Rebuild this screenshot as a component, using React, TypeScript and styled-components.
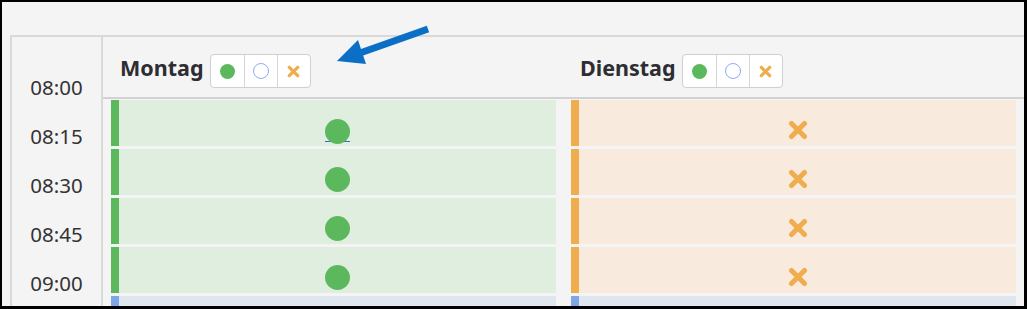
import React from "react";
import styled, { createGlobalStyle } from "styled-components";

type Status = "yes" | "maybe" | "no" | "open";

const palette: Record<Status, { bar: string; fill: string }> = {
  yes: { bar: "#5cb85c", fill: "#e0eee0" },
  no: { bar: "#f0ad4e", fill: "#f8ebde" },
  maybe: { bar: "#7ea7e8", fill: "#dfe6f0" },
  open: { bar: "#7ea7e8", fill: "#dfe6f0" },
};

const GlobalStyle = createGlobalStyle`
  html, body {
    margin: 0;
    padding: 0;
    background: #000;
    font-family: "Noto Sans", "Open Sans", Arial, sans-serif;
    color: #333;
  }
`;

const Frame = styled.div`
  position: relative;
  width: 1027px;
  height: 309px;
  box-sizing: border-box;
  border: 2px solid #000;
  border-right-width: 3px;
  border-bottom-width: 3px;
  background: #f4f4f4;
  overflow: hidden;
  padding: 33px 0 0 8px;
`;

const Table = styled.div`
  display: grid;
  grid-template-columns: 91px 1fr;
  height: 100%;
  border-top: 2px solid #d9d9d9;
  border-left: 2px solid #d9d9d9;
`;

const TimeColumn = styled.div`
  display: flex;
  flex-direction: column;
  padding-top: 25px;
  border-right: 2px solid #dadada;
`;

const TimeLabel = styled.div`
  height: 49px;
  flex: none;
  display: flex;
  align-items: center;
  justify-content: center;
  font-size: 20.5px;
  color: #333;
`;

const Main = styled.div`
  display: flex;
  flex-direction: column;
  min-width: 0;
`;

const HeaderRow = styled.div`
  display: grid;
  grid-template-columns: 1fr 1fr;
  column-gap: 15px;
  height: 60px;
  padding: 0 8px;
  border-bottom: 2px solid #d2d2d2;
`;

const DayHeader = styled.div`
  display: flex;
  align-items: center;
  gap: 6px;
  padding: 8px 0 0 9px;
`;

const DayName = styled.span`
  font-size: 21.5px;
  font-weight: 700;
  color: #2d2d33;
  padding-bottom: 7px;
`;

const ToggleGroup = styled.div`
  display: inline-flex;
  height: 34px;
  box-sizing: border-box;
  border: 1px solid #cfcfcf;
  border-radius: 4px;
  background: #fff;
  overflow: hidden;
`;

const ToggleButton = styled.button`
  width: 33px;
  height: 32px;
  padding: 0;
  border: none;
  border-left: 1px solid #d6d6d6;
  background: transparent;
  display: flex;
  align-items: center;
  justify-content: center;
  &:first-child {
    border-left: none;
  }
`;

const Dot = styled.span<{ $size: number; $outline?: boolean }>`
  display: inline-block;
  width: ${(p) => p.$size}px;
  height: ${(p) => p.$size}px;
  box-sizing: border-box;
  border-radius: 50%;
  background: ${(p) => (p.$outline ? "transparent" : "#5cb85c")};
  border: ${(p) => (p.$outline ? "1.5px solid #8eabf3" : "none")};
`;

const Body = styled.div`
  display: grid;
  grid-template-columns: 1fr 1fr;
  column-gap: 15px;
  padding: 1px 8px 0;
`;

const DayColumn = styled.div`
  display: flex;
  flex-direction: column;
  gap: 3px;
`;

const Slot = styled.div<{ $status: Status }>`
  height: 46px;
  flex: none;
  box-sizing: border-box;
  border-left: 8px solid ${(p) => palette[p.$status].bar};
  background: ${(p) => palette[p.$status].fill};
  display: flex;
  align-items: center;
  justify-content: center;
  padding-top: 14px;
`;

const Link = styled.a`
  display: inline-flex;
  border-bottom: 1.5px solid #2a6fd6;
  line-height: 0;
`;

const LinkDot = styled(Dot)`
  margin-bottom: -3px;
`;

const Arrow = styled.svg`
  position: absolute;
  left: 328px;
  top: 13px;
  width: 110px;
  height: 56px;
  pointer-events: none;
`;

const Cross = ({ size }: { size: number }) => (
  <svg width={size} height={size} viewBox="0 0 20 20">
    <g stroke="#f0ad4e" strokeWidth={5} strokeLinecap="round">
      <line x1={3.5} y1={3.5} x2={16.5} y2={16.5} />
      <line x1={16.5} y1={3.5} x2={3.5} y2={16.5} />
    </g>
  </svg>
);

const Toggles = () => (
  <ToggleGroup>
    <ToggleButton>
      <Dot $size={15} />
    </ToggleButton>
    <ToggleButton>
      <Dot $size={16} $outline />
    </ToggleButton>
    <ToggleButton>
      <Cross size={13} />
    </ToggleButton>
  </ToggleGroup>
);

const times = ["08:00", "08:15", "08:30", "08:45", "09:00"];

const days: { name: string; slots: Status[] }[] = [
  { name: "Montag", slots: ["yes", "yes", "yes", "yes", "open"] },
  { name: "Dienstag", slots: ["no", "no", "no", "no", "open"] },
];

const SlotIcon = ({ status, first }: { status: Status; first: boolean }) => {
  if (status === "yes") {
    return first ? (
      <Link href="#">
        <LinkDot $size={25} />
      </Link>
    ) : (
      <Dot $size={25} />
    );
  }
  if (status === "no") return <Cross size={20} />;
  return null;
};

export default function App() {
  return (
    <>
      <GlobalStyle />
      <Frame>
        <Table>
          <TimeColumn>
            {times.map((t) => (
              <TimeLabel key={t}>{t}</TimeLabel>
            ))}
          </TimeColumn>
          <Main>
            <HeaderRow>
              {days.map((d) => (
                <DayHeader key={d.name}>
                  <DayName>{d.name}</DayName>
                  <Toggles />
                </DayHeader>
              ))}
            </HeaderRow>
            <Body>
              {days.map((d) => (
                <DayColumn key={d.name}>
                  {d.slots.map((s, i) => (
                    <Slot key={i} $status={s}>
                      <SlotIcon status={s} first={i === 0} />
                    </Slot>
                  ))}
                </DayColumn>
              ))}
            </Body>
          </Main>
        </Table>
        <Arrow viewBox="0 0 110 56">
          <line x1={30} y1={38} x2={98} y2={14} stroke="#0b6fc6" strokeWidth={7} />
          <polygon points="7,46 28,25 36,49" fill="#0b6fc6" />
        </Arrow>
      </Frame>
    </>
  );
}
